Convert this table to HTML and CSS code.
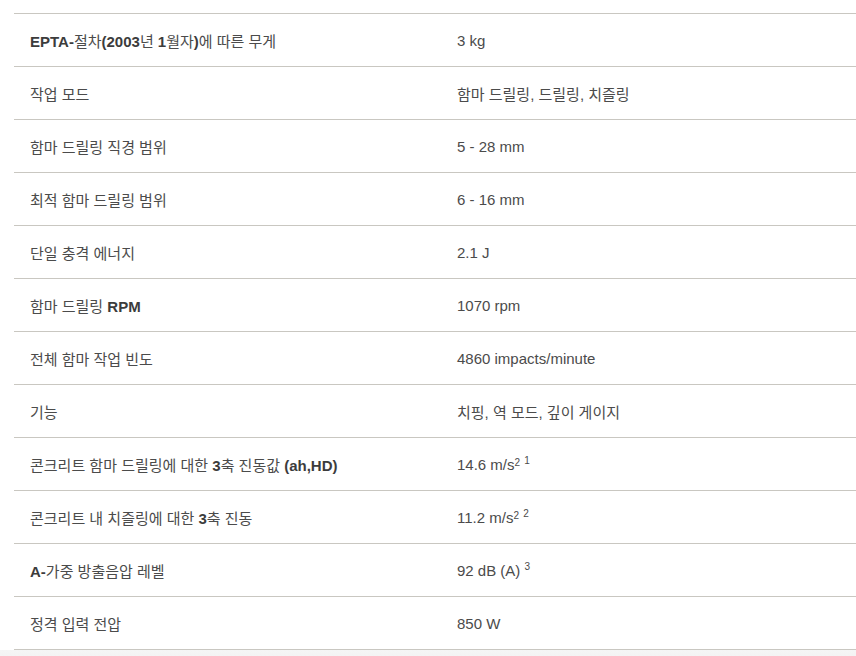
FILE: index.html
```html
<!DOCTYPE html>
<html lang="ko">
<head>
<meta charset="utf-8">
<link rel="stylesheet" href="styles.css">
</head>
<body>
<div class="specs">
  <div class="row"><div class="label"><b>EPTA-</b>절차<b>(2003</b>년 <b>1</b>월자<b>)</b>에 따른 무게</div><div class="value">3 kg</div></div>
  <div class="row"><div class="label">작업 모드</div><div class="value">함마 드릴링, 드릴링, 치즐링</div></div>
  <div class="row"><div class="label">함마 드릴링 직경 범위</div><div class="value">5 - 28 mm</div></div>
  <div class="row"><div class="label">최적 함마 드릴링 범위</div><div class="value">6 - 16 mm</div></div>
  <div class="row"><div class="label">단일 충격 에너지</div><div class="value">2.1 J</div></div>
  <div class="row"><div class="label">함마 드릴링 <b>RPM</b></div><div class="value">1070 rpm</div></div>
  <div class="row"><div class="label">전체 함마 작업 빈도</div><div class="value">4860 impacts/minute</div></div>
  <div class="row"><div class="label">기능</div><div class="value">치핑, 역 모드, 깊이 게이지</div></div>
  <div class="row"><div class="label">콘크리트 함마 드릴링에 대한 <b>3</b>축 진동값 <b>(ah,HD)</b></div><div class="value">14.6 m/s<span class="sq">2</span> <sup>1</sup></div></div>
  <div class="row"><div class="label">콘크리트 내 치즐링에 대한 <b>3</b>축 진동</div><div class="value">11.2 m/s<span class="sq">2</span> <sup>2</sup></div></div>
  <div class="row"><div class="label"><b>A-</b>가중 방출음압 레벨</div><div class="value">92 dB (A) <sup>3</sup></div></div>
  <div class="row"><div class="label">정격 입력 전압</div><div class="value">850 W</div></div>
</div>
<div class="foot"></div>
</body>
</html>
```
FILE: styles.css
```css
html, body {
  margin: 0;
  padding: 0;
  background: #fff;
}
body {
  font-family: "Liberation Sans", Arial, "Noto Sans CJK KR", sans-serif;
  font-size: 15px;
  color: #4b4b4b;
  overflow: hidden;
  height: 656px;
}
.specs {
  margin-left: 14px;
  padding-top: 13px;
}
.row {
  display: flex;
  align-items: center;
  height: 52px;
  border-top: 1px solid #c9c7c1;
}
.row:last-child {
  border-bottom: 1px solid #c9c7c1;
}
.label {
  width: 427px;
  padding-left: 16px;
  box-sizing: border-box;
}
.value {
  flex: 1;
  padding-left: 16px;
}
b {
  font-weight: bold;
  color: #3c3c3c;
}
.sq {
  font-size: 10px;
  position: relative;
  top: -4px;
}
sup {
  font-size: 10px;
  line-height: 0;
  vertical-align: 6px;
}
.foot {
  height: 20px;
  background: linear-gradient(#f5f5f5, #f0f0f0);
}
```
